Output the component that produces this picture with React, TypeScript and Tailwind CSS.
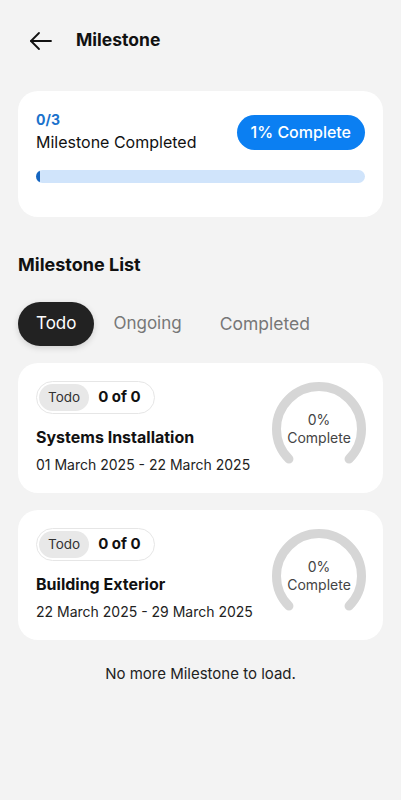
import React from "react";

function Gauge() {
  const r = 42.5;
  const cx = 47;
  const cy = 47;
  const a1 = (135 * Math.PI) / 180;
  const a2 = (45 * Math.PI) / 180;
  const x1 = cx + r * Math.cos(a1);
  const y1 = cy + r * Math.sin(a1);
  const x2 = cx + r * Math.cos(a2);
  const y2 = cy + r * Math.sin(a2);
  const d = `M ${x1} ${y1} A ${r} ${r} 0 1 1 ${x2} ${y2}`;
  return (
    <div className="relative w-[94px] h-[94px] shrink-0">
      <svg width="94" height="94" viewBox="0 0 94 94">
        <path d={d} fill="none" stroke="#d6d6d6" strokeWidth="9" strokeLinecap="round" />
      </svg>
      <div className="absolute inset-0 flex flex-col items-center justify-center text-[14px] leading-[18px] text-[#444]">
        <span>0%</span>
        <span>Complete</span>
      </div>
    </div>
  );
}

function MilestoneCard({ title, dates }: { title: string; dates: string }) {
  return (
    <div className="bg-white rounded-[20px] flex items-center justify-between pl-[18px] pr-[17px] pt-[18px] pb-[17px]">
      <div className="flex flex-col">
        <div className="self-start flex items-center border border-[#e6e6e6] rounded-full h-[33px] pl-[2px] pr-[13px]">
          <span className="bg-[#e8e8e8] rounded-full h-[27px] px-[9px] flex items-center text-[13.5px] text-[#333]">Todo</span>
          <span className="ml-[9px] text-[15px] font-bold text-[#111]">0 of 0</span>
        </div>
        <div className="mt-[12px] text-[16px] leading-[22px] font-bold text-[#111]">{title}</div>
        <div className="mt-[6px] text-[14px] leading-[22px] text-[#222]">{dates}</div>
      </div>
      <Gauge />
    </div>
  );
}

export default function App() {
  return (
    <div
      className="min-h-[800px] w-full bg-[#f3f3f3]"
      style={{ fontFamily: "Inter, 'Noto Sans', sans-serif" }}
    >
      <div className="h-[80px] flex items-center pl-[29px] pt-[1px]">
        <svg width="24" height="24" viewBox="0 0 24 24" fill="none" stroke="#111" strokeWidth="1.8" strokeLinecap="round" strokeLinejoin="round">
          <path d="M22 12H2" />
          <path d="M10 4L2 12l8 8" />
        </svg>
        <span className="ml-[23px] text-[17.5px] font-bold text-[#111]">Milestone</span>
      </div>

      <div className="mx-[18px] mt-[11px] bg-white rounded-[20px] px-[18px] pt-[20px] pb-[34px]">
        <div className="flex items-center justify-between">
          <div className="flex flex-col">
            <span className="text-[14px] leading-[18px] font-bold text-[#1a72cc]">0/3</span>
            <span className="mt-[2px] text-[16px] leading-[22px] text-[#111]">Milestone Completed</span>
          </div>
          <div className="bg-[#0b7ff2] rounded-full h-[35px] px-[14px] flex items-center text-white text-[16px] font-medium">
            1% Complete
          </div>
        </div>
        <div className="mt-[17px] h-[13px] rounded-full bg-[#d0e4fb] overflow-hidden">
          <div className="h-full w-[4px] bg-[#1565c0] rounded-full" />
        </div>
      </div>

      <div className="mx-[18px] mt-[36px] text-[18px] leading-[24px] font-bold text-[#111]">Milestone List</div>

      <div className="mx-[18px] mt-[25px] flex items-center">
        <div className="bg-[#222] text-white rounded-full h-[44px] px-[18px] flex items-center text-[17px] shadow-[0_2px_6px_rgba(0,0,0,0.15)]">Todo</div>
        <div className="h-[44px] pl-[19px] pr-[20px] flex items-center text-[17px] text-[#777]">Ongoing</div>
        <div className="h-[44px] px-[18px] flex items-center text-[17.5px] text-[#777]">Completed</div>
      </div>

      <div className="mx-[18px] mt-[17px] flex flex-col gap-[17px]">
        <MilestoneCard title="Systems Installation" dates="01 March 2025 - 22 March 2025" />
        <MilestoneCard title="Building Exterior" dates="22 March 2025 - 29 March 2025" />
      </div>

      <div className="mt-[23px] text-center text-[15px] leading-[22px] text-[#222]">No more Milestone to load.</div>
    </div>
  );
}
